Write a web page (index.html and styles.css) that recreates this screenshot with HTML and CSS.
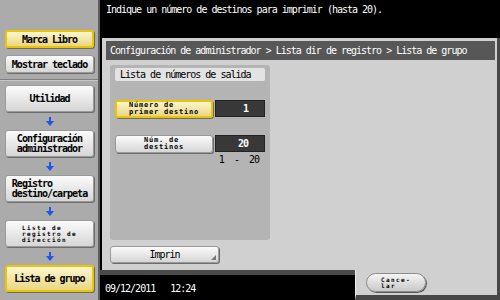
FILE: index.html
```html
<!DOCTYPE html>
<html lang="es">

<head>
    <meta charset="UTF-8">
    <meta name="viewport" content="width=device-width, initial-scale=1.0">
    <title>Lista de grupo</title>
    <link rel="stylesheet" href="styles.css">
</head>

<body>
    <div class="screen">
        <aside class="side">
            <div class="side-top">
                <a href="javascript:;" class="key key-on">Marca Libro</a>
                <a href="javascript:;" class="key">Mostrar teclado</a>
            </div>
            <ol class="path">
                <li class="key step">Utilidad</li>
                <li class="arrow"><svg width="8" height="9" viewBox="0 0 8 9"><rect x="3" y="0" width="2" height="4"/><polygon points="0,4 8,4 4,9"/></svg></li>
                <li class="key step"><span class="lines">Configuración<br>administrador</span></li>
                <li class="arrow"><svg width="8" height="9" viewBox="0 0 8 9"><rect x="3" y="0" width="2" height="4"/><polygon points="0,4 8,4 4,9"/></svg></li>
                <li class="key step"><span class="lines">Registro<br>destino/carpeta</span></li>
                <li class="arrow"><svg width="8" height="9" viewBox="0 0 8 9"><rect x="3" y="0" width="2" height="4"/><polygon points="0,4 8,4 4,9"/></svg></li>
                <li class="key step"><span class="lines tiny">Lista de<br>registro de<br>dirección</span></li>
                <li class="arrow"><svg width="8" height="9" viewBox="0 0 8 9"><rect x="3" y="0" width="2" height="4"/><polygon points="0,4 8,4 4,9"/></svg></li>
                <li class="key step key-on">Lista de grupo</li>
            </ol>
        </aside>

        <main class="main">
            <div class="message">Indique un número de destinos para imprimir (hasta 20).</div>

            <section class="panel">
                <h1 class="crumb">Configuración de administrador &gt; Lista dir de registro &gt; Lista de grupo</h1>
                <div class="box">
                    <div class="box-title">Lista de números de salida</div>
                    <div class="field first">
                        <a href="javascript:;" class="key key-on field-btn"><span class="lines small">Número de<br>primer destino</span></a>
                        <div class="value">1</div>
                    </div>
                    <div class="field">
                        <a href="javascript:;" class="key field-btn"><span class="lines small">Núm. de<br>destinos</span></a>
                        <div class="value">20</div>
                    </div>
                    <div class="range">1  -  20</div>
                </div>
                <a href="javascript:;" class="key print">Imprin</a>
            </section>

            <div class="bottom">
                <div class="clock">09/12/2011   12:24</div>
                <div class="tab">
                    <a href="javascript:;" class="cancel"><span class="lines tiny">Cance-<br>lar</span></a>
                </div>
            </div>
        </main>
    </div>
</body>

</html>
```

FILE: styles.css
```css
* {
    margin: 0;
    padding: 0;
    box-sizing: border-box;
}

ul,
ol {
    list-style: none;
}

a {
    color: #000;
    text-decoration: none;
}

body {
    width: 500px;
    height: 300px;
    overflow: hidden;
    background-color: #000;
    font-family: "DejaVu Sans Mono", "Liberation Mono", monospace;
    font-size: 10px;
    letter-spacing: -1px;
    color: #000;
}

.screen {
    display: flex;
    height: 300px;
}

/* barra lateral */
.side {
    width: 100px;
    background-color: #ababab;
    border-right: 2px solid #5e5e5e;
    display: flex;
    flex-direction: column;
}

.side-top {
    display: flex;
    flex-direction: column;
    gap: 7px;
    padding: 30px 0 6px 5px;
    border-bottom: 1px solid #808080;
    box-shadow: 0 1px 0 #c6c6c6;
}

.key {
    display: flex;
    align-items: center;
    justify-content: center;
    width: 89px;
    height: 18px;
    border: 1px solid #9a9a9a;
    border-radius: 3px;
    background: linear-gradient(#fbfbfb, #d6d6d6);
    box-shadow: 1px 1px 0 #6c6c6c;
    font-weight: bold;
    white-space: nowrap;
}

.key-on {
    border: 2px solid #ecc400;
    background: linear-gradient(#fdf6d0, #ead682);
}

.path {
    display: flex;
    flex-direction: column;
    padding: 5px 0 0 5px;
}

.step {
    height: 27px;
}

.arrow {
    display: flex;
    align-items: center;
    justify-content: center;
    width: 89px;
    height: 18px;
    fill: #1f55e8;
}

.lines {
    display: inline-block;
    text-align: left;
    line-height: 10px;
}

.tiny {
    font-size: 6px;
    letter-spacing: 1.4px;
    line-height: 6px;
}

.small {
    font-size: 7px;
    letter-spacing: 0.8px;
    line-height: 7px;
}

/* area principal */
.main {
    flex: 1;
    display: flex;
    flex-direction: column;
}

.message {
    height: 38px;
    padding: 4px 0 0 6px;
    color: #fff;
    line-height: 12px;
}

.panel {
    flex: 1;
    margin-left: 2px;
    padding: 3px 2px 0 4px;
    background-color: #d0d0d0;
    border-right: 3px solid #474747;
}

.crumb {
    height: 19px;
    padding-left: 4px;
    background-color: #575757;
    color: #fff;
    font-size: 10px;
    font-weight: normal;
    line-height: 19px;
    white-space: nowrap;
}

.box {
    width: 160px;
    height: 175px;
    margin: 5px 0 0 4px;
    padding: 3px 5px;
    background-color: #b4b4b4;
    border-radius: 3px;
}

.box-title {
    height: 13px;
    padding-left: 5px;
    background-color: #e3e3e3;
    border-radius: 2px;
    line-height: 13px;
}

.field {
    display: flex;
    gap: 2px;
    margin-top: 17px;
}

.field.first {
    margin-top: 19px;
}

.field-btn {
    width: 98px;
}

.value {
    width: 50px;
    height: 17px;
    padding-right: 16px;
    background-color: #383838;
    border: 1px solid #222;
    color: #fff;
    font-weight: bold;
    text-align: right;
    line-height: 15px;
}

.range {
    padding: 2px 6px 0 0;
    text-align: right;
    white-space: pre;
    line-height: 10px;
}

.print {
    position: relative;
    width: 109px;
    height: 17px;
    margin: 6px 0 0 4px;
    font-weight: normal;
}

.print::after {
    content: "";
    position: absolute;
    right: 2px;
    bottom: 2px;
    border-style: solid;
    border-width: 0 0 5px 5px;
    border-color: transparent transparent #777 transparent;
}

/* barra inferior */
.bottom {
    display: flex;
    height: 30px;
}

.clock {
    width: 255px;
    padding: 8px 0 0 5px;
    border-top: 5px solid #4b4b4b;
    color: #fff;
    white-space: pre;
    line-height: 12px;
}

.tab {
    flex: 1;
    padding: 3px 0 0 10px;
    background-color: #d0d0d0;
    border-left: 1px solid #ececec;
    border-right: 3px solid #474747;
    border-bottom: 5px solid #474747;
}

.cancel {
    display: flex;
    align-items: center;
    justify-content: center;
    width: 60px;
    height: 19px;
    border: 1px solid #8c8c8c;
    border-radius: 10px;
    background: linear-gradient(#f5f5f5, #c9c9c9);
    box-shadow: 1px 1px 0 #5a5a5a;
    font-weight: bold;
}
```
